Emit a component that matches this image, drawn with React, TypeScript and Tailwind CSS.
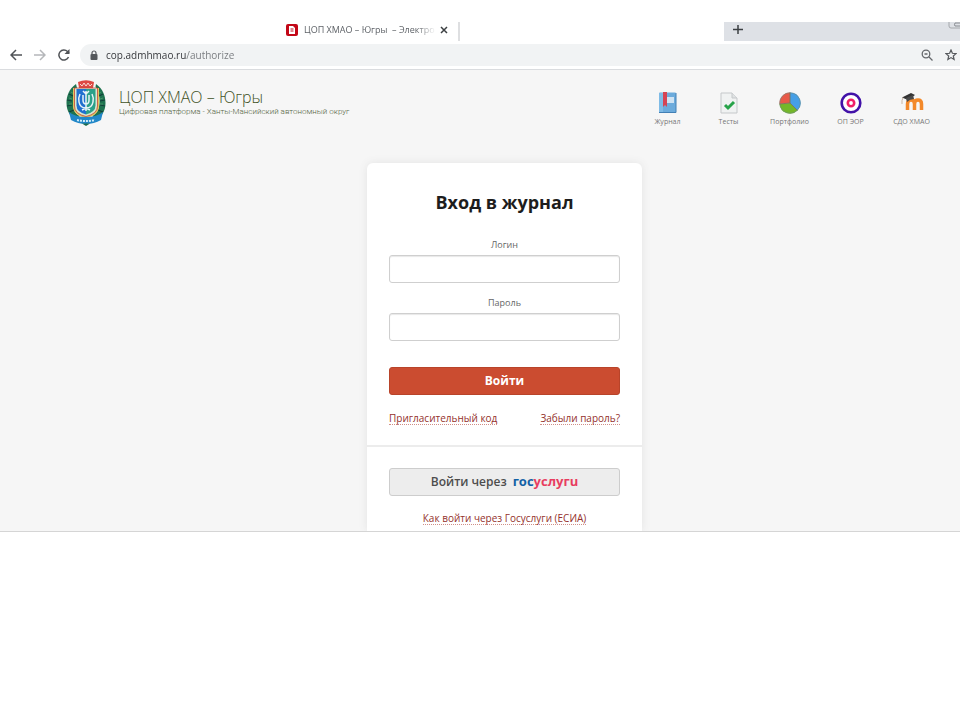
import React from "react";

function Emblem() {
  return (
    <svg viewBox="0 0 40 46" className="h-[46px] w-10 shrink-0" aria-hidden="true">
      <path d="M10 4C3 9 .5 16 .5 23c0 8 4 14 10 18l3-5C8 33 7 28 7 22c0-6 1-10 4-14z" fill="#1f7350" />
      <path d="M30 4c7 5 9.500 12 9.500 19 0 8-4 14-10 18l-3-5c6-4 7-9 7-15 0-6-1-10-4-14z" fill="#1f7350" />
      <path d="M7 9l3 3M3 14l4 2M1 20l5 1M1 26l5-1M3 32l5-2M33 9l-3 3M37 14l-4 2M39 20l-5 1M39 26l-5-1M37 32l-5-2" stroke="#123f3a" strokeWidth="1.200" />
      <path d="M5 12l3 2M3 18l3 1M3 24h3M35 12l-3 2M37 18l-3 1M37 24h-3" stroke="#4f9d6c" strokeWidth=".8" />
      <path d="M12 2q8-3.500 16 0l-1 6H13z" fill="#dd4943" />
      <path d="M14 4l2 2 2-3 2 3 2-3 2 3 2-2" stroke="#f8d8d2" fill="none" />
      <path d="M7 8h26v18q0 9-13 12Q7 35 7 26z" fill="#e0c45c" />
      <path d="M8.500 8h23v18q0 8-11.500 10.500Q8.500 34 8.500 26z" fill="#d9e8cf" stroke="#c5443b" strokeWidth=".8" />
      <path d="M10.500 9H20v25.500q-9.500-2.500-9.500-9z" fill="#2070cf" />
      <path d="M20 9h9.500v16.500q0 6.500-9.500 9z" fill="#2ba08a" />
      <path d="M14 14q-2 4-1 8 1 6 7 6t7-6q1-4-1-8M17 15v5q0 4 3 4t3-4v-5M20 11v20M16 30l4-2 4 2M17 11l3 3 3-3" fill="none" stroke="#e8f4f8" strokeWidth="1.500" />
      <path d="M3 32q6 5 17 5t17-5l-2 8q-7 4-15 4T5 40z" fill="#2187c8" />
      <path d="M11 40q9 2 18 0" fill="none" stroke="#d2ecf7" strokeWidth="2" strokeDasharray="2 1" />
      <path d="M16 43.500l4 2.500 4-2.500z" fill="#1d6b4c" />
    </svg>
  );
}

function JournalIcon() {
  return (
    <svg viewBox="0 0 20 24" className="h-6 w-5" aria-hidden="true">
      <rect x="1" y="1.500" width="17" height="20.500" rx="1" fill="#6cabdc" />
      <path d="M1 2h4v20H1z" fill="#7fbbe6" />
      <path d="M1 21.500h17V2" fill="none" stroke="#4280b5" />
      <rect x="9" y="6" width="7" height="6" fill="#cfe3f3" />
      <path d="M5 1h4v15l-2-2-2 2z" fill="#d64354" />
    </svg>
  );
}

function TestsIcon() {
  return (
    <svg viewBox="0 0 20 24" className="h-6 w-5" aria-hidden="true">
      <path d="M2 2h11l5 5v15H2z" fill="#f0f2f2" stroke="#c5c8ca" />
      <path d="M13 2v5h5" fill="#dfe2e3" stroke="#c5c8ca" />
      <path d="M6 14l3 3 6-6" fill="none" stroke="#27a349" strokeWidth="3" />
    </svg>
  );
}

function PieIcon() {
  return (
    <svg viewBox="0 0 24 24" className="size-6" aria-hidden="true">
      <path d="M12 12V1.500a10.500 10.500 0 0 1 7.500 18z" fill="#469fe6" />
      <path d="M12 12l7.500 7.500A10.500 10.500 0 0 1 1.500 13z" fill="#74b729" />
      <path d="M12 12L1.500 13A10.500 10.500 0 0 1 12 1.500z" fill="#e85a49" />
      <circle cx="12" cy="12" r="10.300" fill="none" stroke="#6d8b83" strokeWidth=".6" />
      <path d="M12 1.500V12L1.500 13M12 12l7.500 7.500" fill="none" stroke="#77745a" strokeWidth=".9" />
    </svg>
  );
}

function TargetIcon() {
  return (
    <svg viewBox="0 0 24 24" className="size-6" aria-hidden="true">
      <circle cx="12" cy="12" r="9.300" fill="white" stroke="#4212a8" strokeWidth="2.600" />
      <circle cx="12" cy="12" r="3.200" fill="white" stroke="#f01f68" strokeWidth="2.600" />
    </svg>
  );
}

function MoodleIcon() {
  return (
    <svg viewBox="0 0 24 24" className="size-6" aria-hidden="true">
      <path d="M7.500 19v-6q0-4 3.500-4t3.500 4v6m0-6q0-4 3.500-4t3.500 4v6" fill="none" stroke="#f3892a" strokeWidth="3.500" />
      <path d="M2 6.500L11 2l4 2-7 5z" fill="#333" />
      <path d="M6 7l7-3 1 4q-4 0-7 3z" fill="#4a4a4a" />
      <path d="M3 6.500q-1.500 3-1 6.500" fill="none" stroke="#b89c83" strokeWidth=".7" />
    </svg>
  );
}

const services = [
  { name: "Журнал", Icon: JournalIcon },
  { name: "Тесты", Icon: TestsIcon },
  { name: "Портфолио", Icon: PieIcon },
  { name: "ОП ЭОР", Icon: TargetIcon },
  { name: "СДО ХМАО", Icon: MoodleIcon },
];

function Browser() {
  return (
    <header className="border-b border-[#dadcdf] pt-[22px] text-[#5f6368]">
      <div className="flex h-[19px]">
        <div className="ml-[286px] flex w-[174px] shrink-0 items-start border-r-2 border-[#dedfe1]">
          <svg viewBox="0 0 12 12" className="mt-0.5 size-3 shrink-0" aria-hidden="true">
            <rect width="12" height="12" rx="2" fill="#c30818" />
            <path d="M3 2h4l2 2v6H3z" fill="white" />
            <path d="M4.500 5h3M4.500 7h3" stroke="#c30818" />
          </svg>
          <div className="ml-1.5 w-[132px] mask-r-from-85% text-[9px] leading-4 whitespace-pre">ЦОП ХМАО – Югры  – Электро</div>
          <button aria-label="Закрыть вкладку" className="ml-1 mt-1 size-2">
            <svg viewBox="0 0 8 8" className="size-2"><path d="M1 1l6 6M7 1L1 7" stroke="#3c4043" strokeWidth="1.500" /></svg>
          </button>
        </div>
        <div className="ml-[264px] flex flex-1 items-start justify-between overflow-hidden bg-[#dee1e6]">
          <button aria-label="Новая вкладка" className="mt-px ml-2 size-3">
            <svg viewBox="0 0 12 12" className="size-3"><path d="M6 2v9M1 6.500h10" stroke="#3c4043" strokeWidth="1.500" /></svg>
          </button>
          <svg viewBox="0 0 12 8" className="h-2 w-3" aria-hidden="true" fill="none"><path d="M1 0v4q0 2 2 2h9" stroke="#a5a8ac" /><path d="M12 4H7q-1-1 0-3h5" stroke="#888b90" /></svg>
        </div>
      </div>
      <div className="flex h-7 items-center pl-2.5">
        <div className="flex gap-3">
          <button aria-label="Назад" className="size-3">
            <svg viewBox="0 0 12 12" className="size-3"><path d="M12 6H1M6 1L1 6l5 5" fill="none" stroke="#505357" strokeWidth="1.500" /></svg>
          </button>
          <button aria-label="Вперёд" className="size-3">
            <svg viewBox="0 0 12 12" className="size-3"><path d="M0 6h11M6 1l5 5-5 5" fill="none" stroke="#b5b7ba" strokeWidth="1.500" /></svg>
          </button>
          <button aria-label="Обновить" className="size-3">
            <svg viewBox="0 0 12 12" className="size-3"><path d="M10.500 8A5 5 0 1 1 9.500 2.500L11 4" fill="none" stroke="#505357" strokeWidth="1.500" /><path d="M11.500 0v5h-5z" fill="#505357" /></svg>
          </button>
        </div>
        <div className="ml-2.5 flex h-[22px] flex-1 items-center rounded-l-full bg-[#f1f3f4] pl-2.5">
          <svg viewBox="0 0 8 10" className="h-2.5 w-2 shrink-0" aria-hidden="true"><rect x="0.500" y="4" width="7" height="6" rx="1" fill="#55585c" /><path d="M2 4V3a2 2 0 0 1 4 0v1" fill="none" stroke="#55585c" strokeWidth="1.200" /></svg>
          <input aria-label="Адрес" type="text" defaultValue="cop.admhmao.ru/authorize" className="ml-2 min-w-0 flex-1 bg-[linear-gradient(90deg,#303236_80px,#75787c_80px)] bg-clip-text text-[10px] leading-4 text-transparent caret-black outline-none" />
          <button aria-label="Масштаб" className="mr-3 size-3">
            <svg viewBox="0 0 12 12" className="size-3" fill="none" stroke="#65686c"><circle cx="5" cy="5" r="3.800" strokeWidth="1.300" /><path d="M3.500 5h3M8 8l3.500 3.500" strokeWidth="1.300" /></svg>
          </button>
          <button aria-label="Добавить в закладки" className="mr-[3px] size-3">
            <svg viewBox="0 0 12 12" className="size-3" fill="none" stroke="#55585c" strokeWidth="1.200"><path d="M6 1l1.400 3.300 3.600.3-2.700 2.400.8 3.500L6 8.600l-3.100 1.900.8-3.500L1 4.600l3.600-.3z" /></svg>
          </button>
        </div>
      </div>
    </header>
  );
}

const linkStyle = "border-b border-dotted border-[#d08f88] text-[10px] leading-3 text-[#94312c]";
const labelStyle = "mb-[3px] block text-center text-[9px] leading-[14px] text-[#666]";
const inputStyle = "block h-7 w-full rounded-[3px] border border-[#cfcfcf] bg-white px-2 text-xs shadow-[inset_0_1px_1px_#e8e8e8]";

export default function App() {
  return (
    <div className="min-h-screen bg-white font-['Open_Sans','Noto_Sans',sans-serif]">
      <Browser />
      <main className="overflow-hidden border-b border-[#d5d5d5] bg-[#f6f6f6]">
        <div className="flex items-start justify-between pt-2.5 pr-[18px] pl-[66px]">
          <div className="flex">
            <Emblem />
            <div className="ml-[13px] pt-1.5">
              <div className="text-base leading-[22px] font-light text-[#3f5226]">ЦОП ХМАО – Югры</div>
              <div className="font-['Roboto','Noto_Sans',sans-serif] text-[8px] leading-2 font-light text-[#53633f]">Цифровая платформа - Ханты-Мансийский автономный округ</div>
            </div>
          </div>
          <nav className="flex pt-[11px]">
            {services.map(({ name, Icon }) => (
              <a key={name} href="#" className="flex w-[61px] flex-col items-center text-[7px] leading-[14px] text-[#777]">
                <Icon />
                <span className="whitespace-nowrap">{name}</span>
              </a>
            ))}
          </nav>
        </div>
        <form className="mt-[34px] ml-[367px] w-[275px] rounded-t-md bg-white shadow-[0_0_8px_#e3e3e3]" onSubmit={(e) => e.preventDefault()}>
          <div className="px-[22px] pt-[25px] pb-5">
            <h1 className="text-center text-lg leading-7 font-bold text-[#1d1d1d]">Вход в журнал</h1>
            <label htmlFor="login" className={`mt-[22px] ${labelStyle}`}>Логин</label>
            <input id="login" type="text" className={inputStyle} />
            <label htmlFor="password" className={`mt-[13px] ${labelStyle}`}>Пароль</label>
            <input id="password" type="password" className={inputStyle} />
            <button type="submit" className="mt-[26px] block h-7 w-full rounded-[3px] border border-[#b8442a] bg-[#cb4c30] text-xs font-bold text-white">Войти</button>
            <div className="mt-[17px] flex justify-between">
              <a href="#" className={linkStyle}>Пригласительный код</a>
              <a href="#" className={linkStyle}>Забыли пароль?</a>
            </div>
          </div>
          <div className="border-t-2 border-[#ececec] px-[22px] pt-[21px] pb-1.5">
            <button type="button" className="flex h-7 w-full items-center justify-center gap-1.5 rounded-[3px] border border-[#cdcdcd] bg-[#ededed] text-xs font-semibold text-[#4d4d4d]">
              <span>Войти через</span>
              <span className="text-[13px] font-bold text-[#e83d60]"><span className="text-[#1261a6]">гос</span>услугu</span>
            </button>
            <a href="#" className={`mx-auto mt-4 block w-fit ${linkStyle}`}>Как войти через Госуслуги (ЕСИА)</a>
          </div>
        </form>
      </main>
    </div>
  );
}
